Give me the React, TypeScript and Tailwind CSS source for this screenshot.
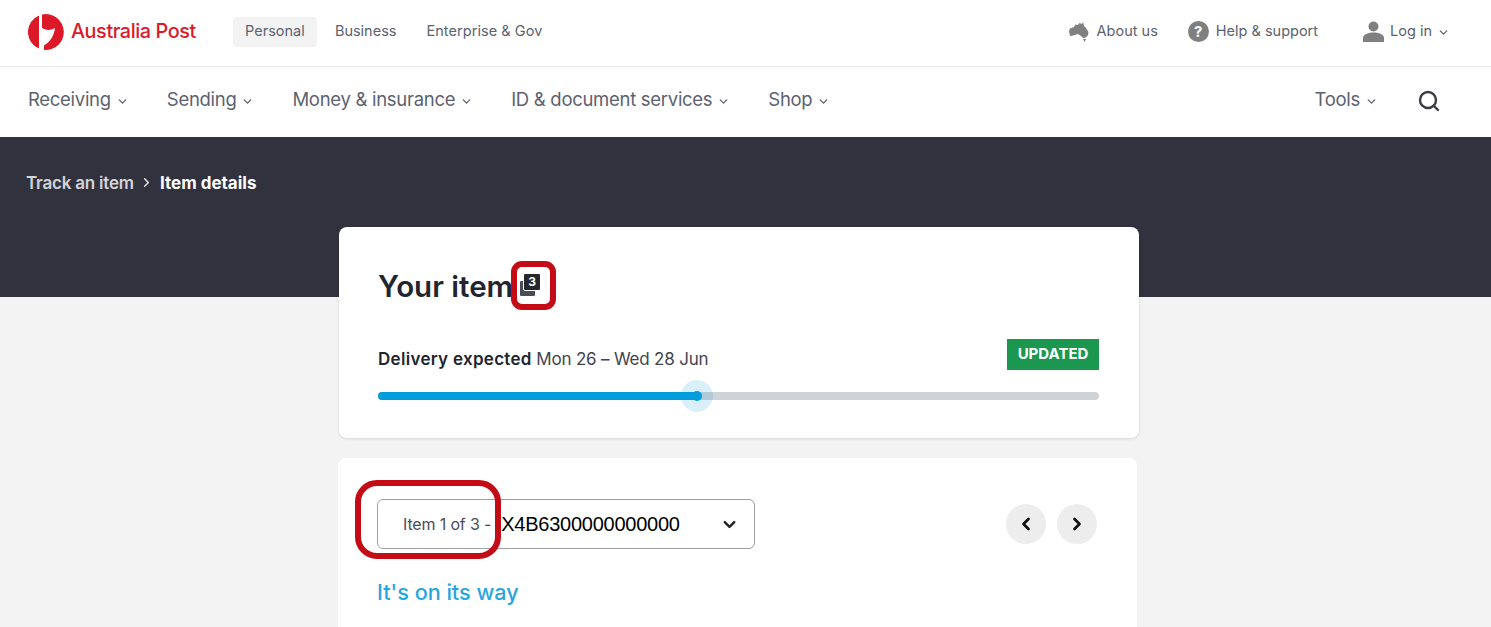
import { ChevronDown, ChevronLeft, ChevronRight, Search } from 'lucide-react';

const FONT = "font-['Inter','Noto_Sans',sans-serif]";

function Logo() {
  return (
    <svg width="37" height="37" viewBox="0 0 37 37" className="shrink-0">
      <path d="M11 1.4 A18 18 0 0 0 11 34.6 Z" fill="#dc1928" />
      <path
        d="M14 0.5 A18 18 0 1 1 16 36 L16 31.5 C22 28 26 22 27 14 C23 16.5 18 16.5 14 14 Z"
        fill="#dc1928"
      />
    </svg>
  );
}

function Australia() {
  return (
    <svg width="20" height="20" viewBox="0 0 20 20">
      <path d="M0 9 L1 6.5 L5 5 L6.5 2.5 L9 3 L10.5 1 L13 2 L14 0 L15 4 L17 6 L19.5 10 L19 13 L17 15.5 L14 16 L12 14 L9 12 L4 13.5 L1 14 Z M14 17 H17 L15.5 20 Z" fill="#808080" />
    </svg>
  );
}

function Help() {
  return (
    <span className="w-[21px] h-[21px] rounded-full bg-[#808080] text-white text-[15px] font-bold flex items-center justify-center leading-none">
      ?
    </span>
  );
}

function Person() {
  return (
    <svg width="21" height="21" viewBox="0 0 21 21">
      <circle cx="10.5" cy="5.5" r="5" fill="#808080" />
      <path d="M0 21 V17 C0 13 6 11.5 10.5 11.5 C15 11.5 21 13 21 17 V21 Z" fill="#808080" />
    </svg>
  );
}

function TopBar() {
  return (
    <div className="h-[67px] border-b border-[#eaeaea] flex items-center pl-[28px] pr-[41px] pb-[2px]">
      <Logo />
      <span className="ml-[6px] text-[19.8px] font-medium text-[#dc1928] tracking-[-0.4px]">Australia Post</span>
      <div className="ml-[37px] flex items-center text-[14.5px] text-[#5c6270]">
        <span className="h-[30px] w-[84px] flex items-center justify-center bg-[#f3f3f3] rounded-sm pb-[3px]">Personal</span>
        <span className="ml-[18px] pb-[3px]">Business</span>
        <span className="ml-[30px] pb-[3px] tracking-[0.05px]">Enterprise &amp; Gov</span>
      </div>
      <div className="ml-auto flex items-center text-[14.5px] text-[#5c6270]">
        <Australia />
        <span className="ml-[8px] pb-[3px]">About us</span>
        <span className="ml-[30px] mb-[2px]"><Help /></span>
        <span className="ml-[7px] pb-[3px]">Help &amp; support</span>
        <span className="ml-[45px] mb-[2px]"><Person /></span>
        <span className="ml-[6px] pb-[3px]">Log in</span>
        <ChevronDown size={13} strokeWidth={2.4} className="ml-[5px]" />
      </div>
    </div>
  );
}

function NavItem({ label, className }: { label: string; className?: string }) {
  return (
    <span className={`flex items-center ${className ?? ''}`}>
      {label}
      <ChevronDown size={13} strokeWidth={2.5} className="ml-[5px] mt-[2px]" />
    </span>
  );
}

function NavBar() {
  return (
    <div className="h-[70px] flex items-center pl-[28px] pr-[50px] pb-[4px] text-[18.5px] text-[#5c6270] tracking-[-0.29px]">
      <NavItem label="Receiving" />
      <NavItem label="Sending" className="ml-[38px]" />
      <NavItem label="Money & insurance" className="ml-[38px]" />
      <NavItem label="ID & document services" className="ml-[38px]" />
      <NavItem label="Shop" className="ml-[38px]" />
      <NavItem label="Tools" className="ml-auto" />
      <Search size={24} strokeWidth={2.4} className="ml-[39px] mt-[2px] text-[#3c3c46]" />
    </div>
  );
}

function ItemsBadge() {
  return (
    <span className="relative inline-block w-[22px] h-[24px] mt-[3px]">
      <span className="absolute left-0 bottom-0 w-[17px] h-[17px] bg-[#4a4e54] rounded-[2px] border border-white" />
      <span className="absolute right-0 top-0 w-[18px] h-[18px] bg-[#24282d] rounded-[2px] border border-white text-white text-[12px] font-bold flex items-center justify-center leading-none">
        3
      </span>
    </span>
  );
}

function DeliveryCard() {
  return (
    <div className="relative ml-[339px] w-[800px] h-[211px] bg-white rounded-lg shadow-[0_1px_3px_rgba(0,0,0,0.12)] pl-[39px] pr-[40px] pt-[41px]">
      <div className="flex items-center">
        <span className="text-[29.5px] leading-[36px] font-semibold text-[#22252d]">Your item</span>
        <span className="ml-[6px]"><ItemsBadge /></span>
      </div>
      {/* annotation */}
      <div className="absolute left-[172px] top-[34px] w-[45px] h-[49px] border-[6px] border-[#c40c16] rounded-[11px]" />
      <div className="mt-[35px] flex items-end justify-between">
        <p className="text-[17px] text-[#42454f] leading-[22px] tracking-[-0.2px]">
          <span className="font-semibold text-[#22252d] tracking-[0.3px]">Delivery expected</span> Mon 26 – Wed 28 Jun
        </p>
        <span className="h-[31px] w-[92px] bg-[#1b9750] text-white text-[15px] font-bold flex items-center justify-center">
          UPDATED
        </span>
      </div>
      <div className="relative mt-[22px] h-[8px] bg-[#ced3d7] rounded-full">
        <div className="h-full w-[319px] bg-[#009ddb] rounded-full" />
        <span className="absolute left-[303px] top-[-12px] w-[32px] h-[32px] rounded-full bg-[#009ddb]/15" />
        <span className="absolute left-[314px] top-[-1px] w-[10px] h-[10px] rounded-full bg-[#009ddb]" />
      </div>
    </div>
  );
}

function ItemCard() {
  return (
    <div className="relative ml-[338px] mt-[20px] w-[799px] h-[169px] bg-white rounded-t-lg pl-[39px] pr-[40px] pt-[41px]">
      <div className="flex items-center justify-between">
        <div className="w-[378px] h-[50px] border-[1.5px] border-[#a0a0a0] rounded-[6px] flex items-center pl-[25px] pr-[15px]">
          <span className="text-[16px] text-[#4a4d57] tracking-[-0.15px] pb-[1px]">Item 1 of 3 -</span>
          <span className="ml-[10px] text-[20px] text-black tracking-[-0.25px] font-['Liberation_Sans',sans-serif]">X4B6300000000000</span>
          <ChevronDown size={19} strokeWidth={3} className="ml-auto text-[#222]" />
        </div>
        <div className="flex items-center gap-[11px]">
          <span className="w-[40px] h-[40px] rounded-full bg-[#ededed] flex items-center justify-center">
            <ChevronLeft size={20} strokeWidth={3.2} className="text-[#111]" />
          </span>
          <span className="w-[40px] h-[40px] rounded-full bg-[#ededed] flex items-center justify-center">
            <ChevronRight size={20} strokeWidth={3.2} className="text-[#111]" />
          </span>
        </div>
      </div>
      {/* annotation */}
      <div className="absolute left-[17px] top-[22px] w-[146px] h-[79px] border-[6px] border-[#c40c16] rounded-[22px]" />
      <p className="mt-[28px] text-[21.6px] leading-[30px] font-medium text-[#29a5de]">It's on its way</p>
    </div>
  );
}

export default function App() {
  return (
    <div className={`w-[1491px] h-[627px] overflow-hidden bg-[#f3f3f3] ${FONT}`}>
      <div className="bg-white">
        <TopBar />
        <NavBar />
      </div>
      <div className="h-[160px] bg-[#32323f] pl-[26px] pt-[33px] flex items-start text-[17px] font-semibold leading-[26px] tracking-[-0.2px]">
        <span className="text-[#d4d4d9]">Track an item</span>
        <ChevronRight size={15} strokeWidth={2.4} className="mx-[5.5px] mt-[5px] text-[#e6e6ea]" />
        <span className="text-white font-bold tracking-[0px]">Item details</span>
      </div>
      <div className="mt-[-70px]">
        <DeliveryCard />
        <ItemCard />
      </div>
    </div>
  );
}
